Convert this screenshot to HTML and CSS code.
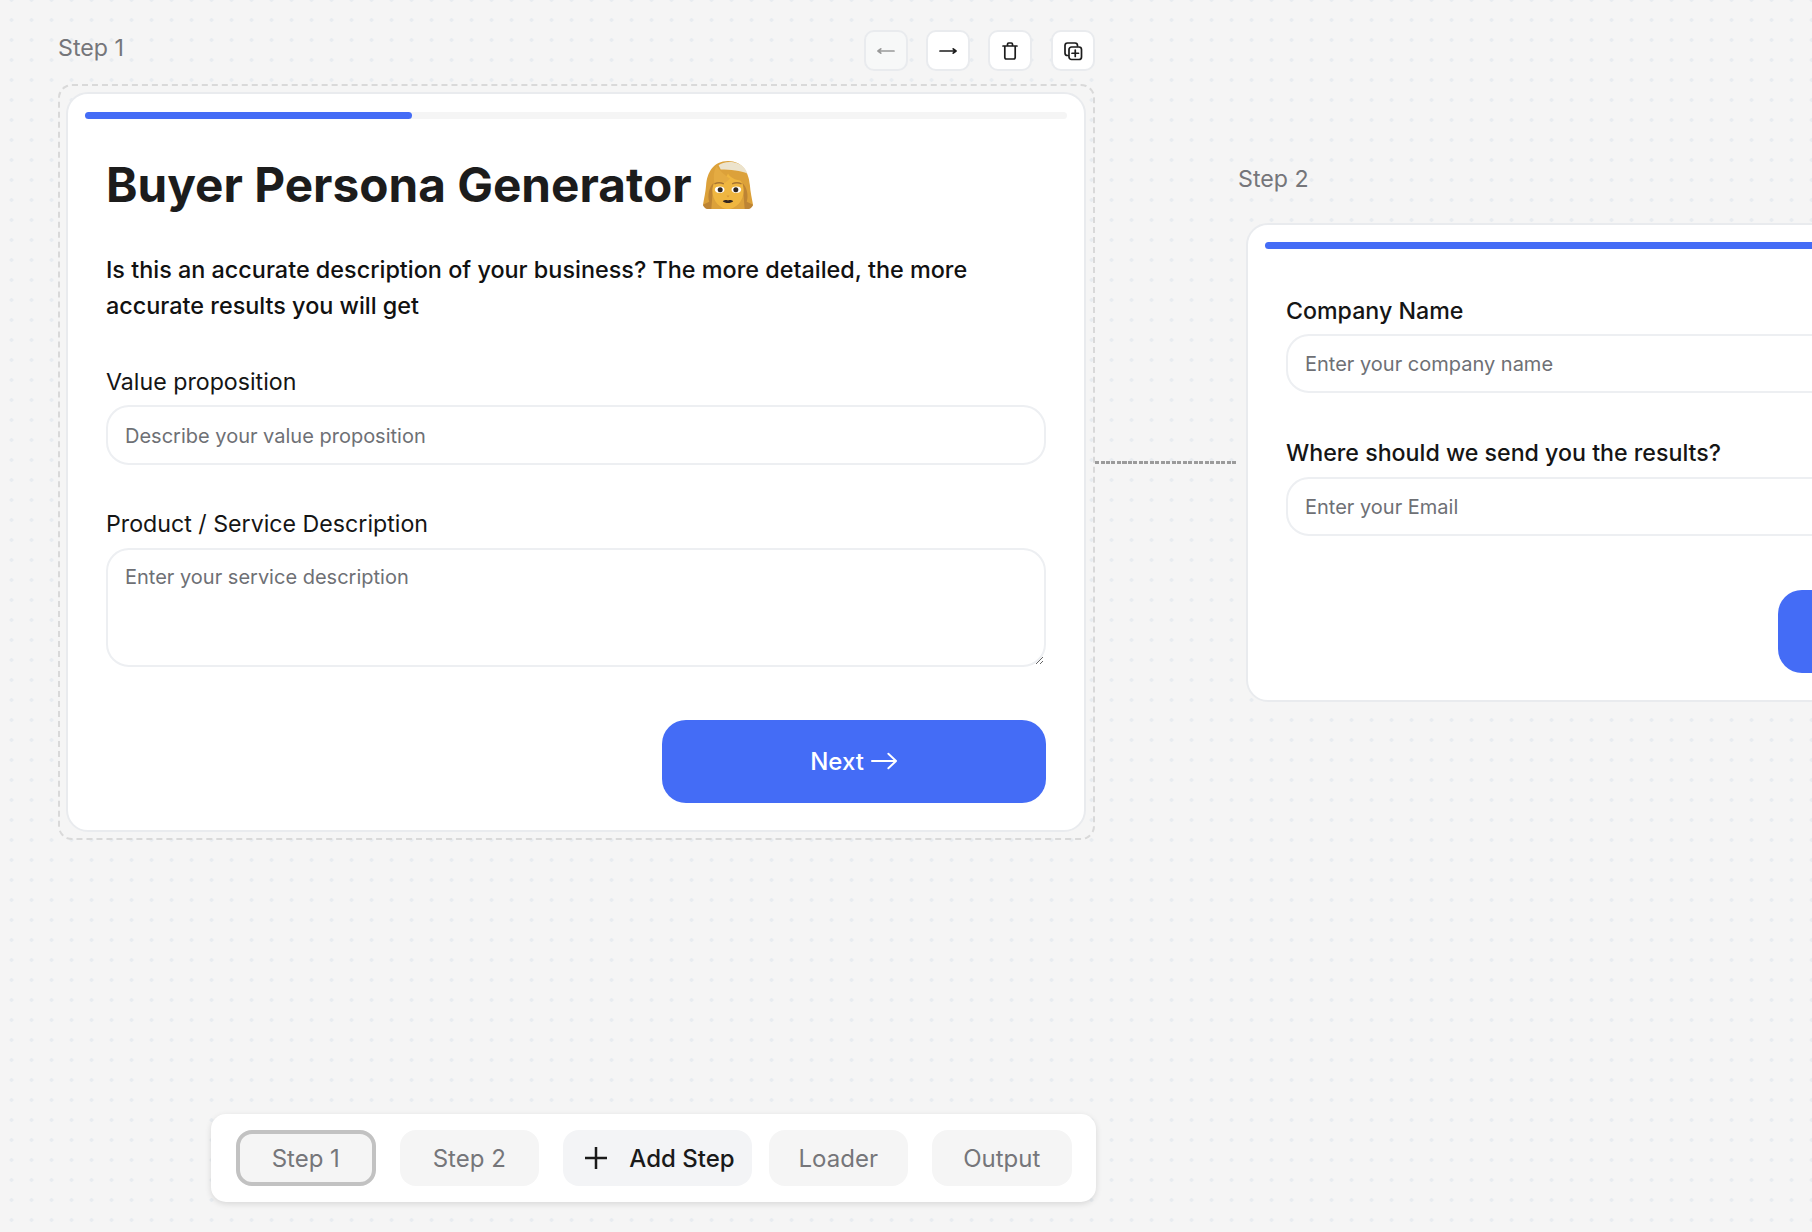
FILE: index.html
```html
<!DOCTYPE html>
<html lang="en">
<head>
<meta charset="utf-8">
<title>Buyer Persona Generator</title>
<link rel="stylesheet" href="styles.css">
</head>
<body>
<main class="canvas">
  <section class="node node-one">
    <header class="node-head">
      <span class="node-label">Step 1</span>
      <div class="node-tools">
        <button class="tool tool-off" aria-label="Move left"><svg class="ico" viewBox="0 0 24 24"><path d="M4 12h16M4 12l2.800-2.200M4 12l2.800 2.200"/></svg></button>
        <button class="tool" aria-label="Move right"><svg class="ico" viewBox="0 0 24 24"><path d="M4 12h16M20 12l-2.800-2.200M20 12l-2.800 2.200"/></svg></button>
        <button class="tool" aria-label="Delete"><svg class="ico" viewBox="0 0 24 24"><path d="M5 7h14M9.500 7V5.200C9.500 4.500 10 4 10.700 4h2.600c.7 0 1.200.5 1.200 1.200V7M6.800 7v11.300c0 1 .7 1.700 1.700 1.700h7c1 0 1.700-.7 1.700-1.700V7"/></svg></button>
        <button class="tool" aria-label="Duplicate"><svg class="ico" viewBox="0 0 24 24"><path d="M7 16.500H6.500A2.500 2.500 0 0 1 4 14V6.500A2.500 2.500 0 0 1 6.500 4H14a2.500 2.500 0 0 1 2.500 2.500V7"/><rect x="8" y="8" width="12.500" height="12.500" rx="2.500"/><path d="M14.250 11v6.500M11 14.250h6.500"/></svg></button>
      </div>
    </header>
    <div class="frame frame-active">
      <form class="card">
        <div class="progress"><div class="progress-fill" style="width:33.33%"></div></div>
        <div class="title-row">
          <h1 class="title">Buyer Persona Generator</h1>
          <svg class="emoji" viewBox="0 0 48 48" role="img" aria-label="woman">
            <path fill="#dca13a" d="M24 1C10 1 4 12 3 24c-.5 7-2 13-3 19 1 2 3 4 5 4h38c2 0 4-2 5-4-1-6-2.500-12-3-19C44 12 38 1 24 1z"/>
            <path fill="#ece3cc" d="M15 5C19 1 33 0 39 7c2 2 3 4 3.500 6C37 10 26 9 17 9z"/>
            <path fill="#bd8434" d="M6 40c-2-6 0-14 4-18l-2 25H4c-2 0-4-3-4-4zM42 40c2-6 0-14-4-18l2 25h4c2 0 4-3 4-4z"/>
            <path fill="#efb640" d="M24 13c-1 4-8 7-12 8-2 2-3 5-3 8 0 11 8 18 15 18s15-7 15-18c0-3-1-7-3-9-5-1-10-3-12-7z"/>
            <path fill="#e4ab42" d="M13 6c3 4 8 9 13 12l-5 4c-3-2-8-1-10 0-1-6-1-11 2-16z"/>
            <ellipse cx="16" cy="28.500" rx="4.600" ry="3" fill="#fff"/>
            <ellipse cx="32" cy="28.500" rx="4.600" ry="3" fill="#fff"/>
            <circle cx="16.500" cy="28.500" r="2.400" fill="#2c2520"/>
            <circle cx="31.500" cy="28.500" r="2.400" fill="#2c2520"/>
            <path fill="none" stroke="#a87532" stroke-width="1.300" d="M11 23c3-1.500 6-1.500 9 0M28 23c3-1.500 6-1.500 9 0"/>
            <path fill="#d99a36" d="M22.500 34h3l-1.500 2z"/>
            <path fill="#33261f" d="M19 39.500c2-1.300 3.500-1.100 5-.7 1.500-.4 3-.6 5 .7-2 2.300-8 2.300-10 0z"/>
          </svg>
        </div>
        <p class="lead">Is this an accurate description of your business? The more detailed, the more accurate results you will get</p>
        <label class="field">
          <span class="field-label">Value proposition</span>
          <input class="control" type="text" placeholder="Describe your value proposition">
        </label>
        <label class="field field-next">
          <span class="field-label">Product / Service Description</span>
          <textarea class="control control-area" placeholder="Enter your service description"></textarea>
        </label>
        <div class="actions">
          <button type="button" class="primary">Next <svg class="primary-arrow" viewBox="0 0 28 18"><path d="M1 9h25M18 1.500L26 9l-8 7.500"/></svg></button>
        </div>
      </form>
    </div>
  </section>

  <div class="connector"></div>

  <section class="node node-two">
    <header class="node-head">
      <span class="node-label">Step 2</span>
    </header>
    <div class="frame">
      <form class="card card-narrow">
        <div class="progress"><div class="progress-fill" style="width:100%"></div></div>
        <label class="field field-first">
          <span class="field-label">Company Name</span>
          <input class="control" type="text" placeholder="Enter your company name">
        </label>
        <label class="field field-next">
          <span class="field-label field-label-strong">Where should we send you the results?</span>
          <input class="control" type="text" placeholder="Enter your Email">
        </label>
        <div class="actions actions-tight">
          <button type="button" class="primary" aria-label="Submit"></button>
        </div>
      </form>
    </div>
  </section>

  <nav class="stepbar">
    <button class="tab tab-current">Step 1</button>
    <button class="tab">Step 2</button>
    <button class="tab tab-add"><svg class="plus" viewBox="0 0 22 22"><path d="M11 0v22M0 11h22"/></svg>Add Step</button>
    <button class="tab">Loader</button>
    <button class="tab">Output</button>
  </nav>
</main>
</body>
</html>
```
FILE: styles.css
```css
* { box-sizing: border-box; }
html, body { margin: 0; height: 100%; }
body {
  overflow: hidden;
  font-family: Inter, "Liberation Sans", sans-serif;
  color: #1a1a1a;
  background: #f5f5f5;
}
.canvas {
  position: relative;
  width: 1812px;
  height: 1232px;
  overflow: hidden;
  background-color: #f5f5f5;
  background-image: radial-gradient(circle, #e8ecf0 1.6px, transparent 1.9px);
  background-size: 20px 20px;
  background-position: 1.5px -10px;
}
.node { position: absolute; width: 1037px; }
.node-one { left: 58px; top: 30px; }
.node-two { left: 1238px; top: 161px; }
.node-head {
  display: flex;
  align-items: flex-start;
  justify-content: space-between;
  height: 41px;
  margin-bottom: 13px;
  padding-right: .5px;
}
.node-label { font-size: 23.200px; line-height: 36px; color: #75767a; }
.node-tools { display: flex; gap: 18.300px; }
.tool {
  display: flex;
  align-items: center;
  justify-content: center;
  width: 44px;
  height: 41px;
  padding: 0;
  background: #fff;
  border: 2px solid #e9ebee;
  border-radius: 10px;
}
.tool-off { background: #f7f8f8; }
.tool-off .ico { stroke: #999; }
.ico {
  width: 24px;
  height: 24px;
  fill: none;
  stroke: #1c1c1c;
  stroke-width: 1.700;
  stroke-linecap: round;
  stroke-linejoin: round;
}
.frame {
  padding: 6px 7px 6px 6px;
  border: 2px dashed transparent;
  border-radius: 14px;
}
.frame-active { border-color: #d9d9d9; }
.card {
  display: flex;
  flex-direction: column;
  width: 1020px;
  padding: 17.500px 38px 27px;
  background: #fff;
  border: 2px solid #e9ebee;
  border-radius: 22px;
}
.card-narrow { width: 956px; padding-top: 16.500px; }
.card-narrow .control { height: 59px; padding-top: 2px; }
.card-narrow .field-next { margin-top: 45px; }
.progress {
  height: 7px;
  margin: 0 -21px;
  background: #f5f5f5;
  border-radius: 4px;
}
.progress-fill { height: 100%; background: #446cf6; border-radius: 4px; }
.title-row { display: flex; align-items: center; gap: 11.500px; height: 56px; margin-top: 38.500px; }
.title { margin: 0; font-size: 47.700px; line-height: 56px; font-weight: 700; color: #1c1c1c; }
.emoji { width: 50px; height: 50px; flex: none; }
.lead {
  margin: 38.500px 0 0;
  font-size: 23.400px;
  line-height: 36px;
  font-weight: 500;
  color: #111;
}
.field { display: flex; flex-direction: column; gap: 8px; margin-top: 43.500px; }
.field-first { margin-top: 47px; }
.field-next { gap: 9px; margin-top: 44px; }
.field-label { font-size: 23.200px; line-height: 30px; font-weight: 400; color: #151515; }
.field-first .field-label, .field-label-strong { font-weight: 500; }
.control {
  display: block;
  width: 100%;
  height: 60px;
  padding: 2px 17px 0;
  font-family: inherit;
  font-size: 20px;
  color: #1a1a1a;
  background: #fff;
  border: 2px solid #edeff2;
  border-radius: 23px;
  outline: none;
}
.control::placeholder { color: #6e7075; opacity: 1; }
.control-area {
  height: 119px;
  padding: 13px 17px;
  line-height: 28px;
  resize: vertical;
}
.actions { display: flex; justify-content: flex-end; margin-top: 52.500px; }
.actions-tight { margin-top: 54px; }
.primary {
  display: flex;
  align-items: center;
  justify-content: center;
  gap: 7px;
  width: 384px;
  height: 83px;
  padding: 0;
  font-family: inherit;
  font-size: 24px;
  font-weight: 500;
  color: #fff;
  background: #446cf6;
  border: 0;
  border-radius: 24px;
}
.primary-arrow {
  width: 27px;
  height: 18px;
  fill: none;
  stroke: #fff;
  stroke-width: 2;
  stroke-linecap: round;
  stroke-linejoin: round;
}
.connector {
  position: absolute;
  left: 1095px;
  top: 461px;
  width: 143px;
  height: 3px;
  background: repeating-linear-gradient(90deg, #9b9b9b 0 4px, transparent 4px 5.500px);
}
.stepbar {
  position: absolute;
  left: 211px;
  top: 1114px;
  display: flex;
  gap: 24px;
  width: 885px;
  height: 88px;
  padding: 16px 24px 16px 25px;
  background: #fff;
  border-radius: 15px;
  box-shadow: 0 2px 6px rgba(0, 0, 0, .12);
}
.tab {
  display: flex;
  align-items: center;
  justify-content: center;
  flex: none;
  width: 139.500px;
  height: 56px;
  padding: 0;
  font-family: inherit;
  font-size: 24px;
  color: #75767a;
  background: #f5f5f5;
  border: 0;
  border-radius: 16px;
}
.tab-current { border: 4px solid #c2c2c2; }
.tab-add {
  gap: 22px;
  width: 189px;
  margin-right: -7.500px;
  padding-left: 5px;
  font-weight: 500;
  color: #1a1a1a;
  background: #f3f4f6;
}
.plus { width: 22px; height: 22px; fill: none; stroke: #1a1a1a; stroke-width: 2.500; }
```
